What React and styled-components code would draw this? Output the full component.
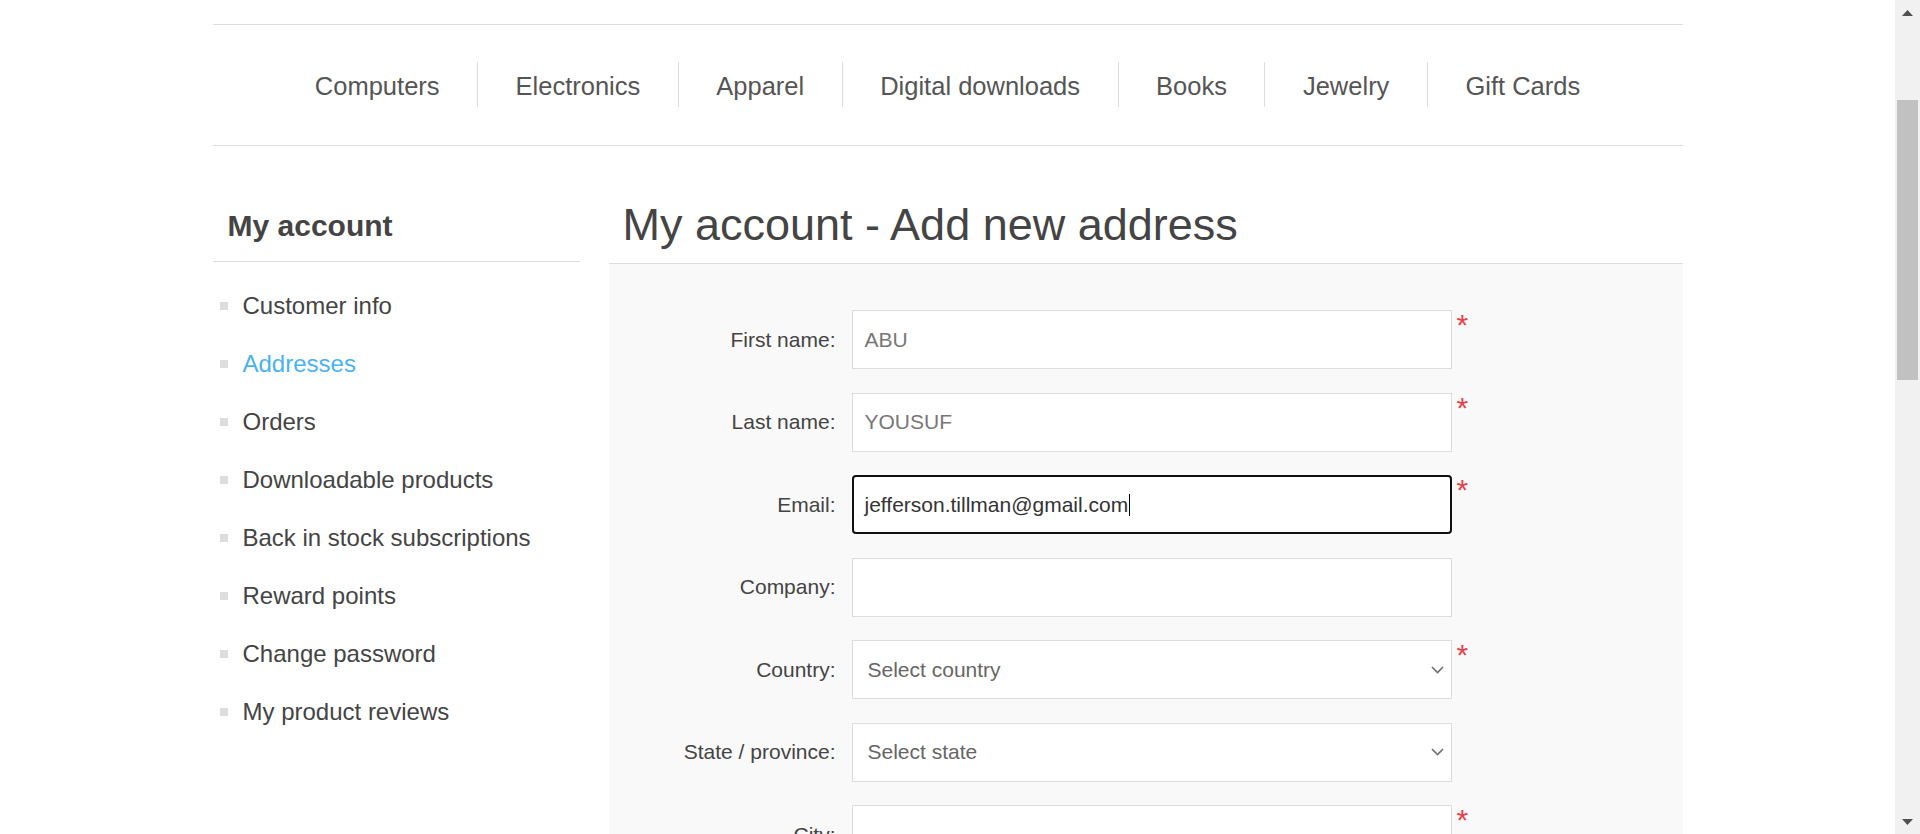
import React from 'react';
import styled, { createGlobalStyle } from 'styled-components';

const GlobalStyle = createGlobalStyle`
  html, body {
    margin: 0;
    padding: 0;
    overflow: hidden;
    background: #fff;
  }
  body {
    font-family: "Liberation Sans", Arial, Helvetica, sans-serif;
    color: #444;
  }
  * {
    box-sizing: border-box;
  }
`;

const Shell = styled.div`
  display: flex;
  height: 100vh;
  overflow: hidden;
`;

const Viewport = styled.div`
  flex: 1;
  min-width: 0;
  overflow: hidden;
`;

const MasterWrapper = styled.div`
  width: 1470px;
  margin: 0 auto;
  padding-top: 24px;
`;

const HeaderMenu = styled.nav`
  border-top: 1px solid #ddd;
  border-bottom: 1px solid #ddd;
  padding: 37px 0 38px;
`;

const MenuList = styled.ul`
  display: flex;
  justify-content: center;
  margin: 0;
  padding: 0;
  list-style: none;
`;

const MenuItem = styled.li`
  height: 45px;
  line-height: 49px;
  padding: 0 37.5px;
  font-size: 25.5px;
  color: #555;
  border-left: 1px solid #ddd;

  &:first-child {
    border-left: 0;
  }
`;

const Main = styled.div`
  display: flex;
  justify-content: space-between;
  margin-top: 44px;
`;

const Side = styled.aside`
  width: 367px;
  flex-shrink: 0;
`;

const BlockTitle = styled.div`
  padding: 18px 0 17px 15px;
  border-bottom: 1px solid #ddd;
  font-size: 30px;
  line-height: 36px;
  font-weight: bold;
  color: #444;
`;

const NavList = styled.ul`
  margin: 0;
  padding: 15px 0 0 7px;
  list-style: none;
`;

const NavItem = styled.li`
  display: flex;
  align-items: center;
  height: 58px;
  font-size: 24px;
  color: ${(p) => (p.$active ? '#4ab2f1' : '#444')};

  &::before {
    content: '';
    width: 8px;
    height: 8px;
    margin-right: 15px;
    background: #ddd;
  }
`;

const Center = styled.section`
  width: 1074px;
  flex-shrink: 0;
`;

const PageTitle = styled.div`
  padding: 9px 14px 12px;
  border-bottom: 1px solid #ddd;
`;

const Heading = styled.h1`
  margin: 0;
  font-size: 45px;
  line-height: 52px;
  font-weight: normal;
  color: #444;
`;

const FormFields = styled.div`
  background: #f9f9f9;
  padding: 46px 0 40px;
`;

const Row = styled.div`
  display: grid;
  grid-template-columns: 243px 600px auto;
  height: 59px;
  margin-bottom: 23.5px;
`;

const Label = styled.label`
  align-self: center;
  padding-right: 16px;
  text-align: right;
  font-size: 21px;
  color: #444;
`;

const Field = styled.div`
  display: flex;
  align-items: center;
  height: 59px;
  padding: 0 ${(p) => (p.$focused ? '11px' : '12px')};
  background: #fff;
  border: ${(p) => (p.$focused ? '2px solid #101010' : '1px solid #ddd')};
  border-radius: ${(p) => (p.$focused ? '4px' : '0')};
  font-size: 21px;
  color: ${(p) => (p.$focused ? '#333' : '#777')};
  white-space: nowrap;
`;

const SelectBox = styled(Field)`
  justify-content: space-between;
  padding: 0 7px 0 15px;
  color: #666;
`;

const Caret = styled.span`
  width: 1px;
  height: 22px;
  margin-left: 1px;
  background: #000;
`;

const Required = styled.span`
  margin-left: 5px;
  font-size: 30px;
  line-height: 30px;
  color: #e4434b;
`;

const ScrollBar = styled.div`
  display: flex;
  flex-direction: column;
  width: 25px;
  flex-shrink: 0;
  background: #f1f1f1;
`;

const ScrollArrow = styled.div`
  display: flex;
  align-items: center;
  justify-content: center;
  height: 25px;
`;

const ScrollTrack = styled.div`
  flex: 1;
  padding: 75px 2px 0;
`;

const ScrollThumb = styled.div`
  height: 280px;
  background: #c1c1c1;
`;

const menu = [
  'Computers',
  'Electronics',
  'Apparel',
  'Digital downloads',
  'Books',
  'Jewelry',
  'Gift Cards',
];

const accountLinks = [
  'Customer info',
  'Addresses',
  'Orders',
  'Downloadable products',
  'Back in stock subscriptions',
  'Reward points',
  'Change password',
  'My product reviews',
];

const fields = [
  { label: 'First name:', value: 'ABU', required: true },
  { label: 'Last name:', value: 'YOUSUF', required: true },
  { label: 'Email:', value: 'jefferson.tillman@gmail.com', required: true, focused: true },
  { label: 'Company:', value: '' },
  { label: 'Country:', select: 'Select country', required: true },
  { label: 'State / province:', select: 'Select state' },
  { label: 'City:', value: '', required: true },
  { label: 'Address 1:', value: '', required: true },
  { label: 'Address 2:', value: '' },
];

function Chevron() {
  return (
    <svg width="13" height="8" viewBox="0 0 13 8">
      <polyline points="1,1 6.5,6.5 12,1" fill="none" stroke="#6e6e6e" strokeWidth="1.6" />
    </svg>
  );
}

function Triangle({ down }) {
  return (
    <svg width="11" height="6" viewBox="0 0 11 6">
      <polygon points={down ? '0,0 11,0 5.5,6' : '5.5,0 11,6 0,6'} fill="#505050" />
    </svg>
  );
}

function FormRow({ field }) {
  return (
    <Row>
      <Label>{field.label}</Label>
      {field.select ? (
        <SelectBox>
          {field.select}
          <Chevron />
        </SelectBox>
      ) : (
        <Field $focused={field.focused}>
          {field.value}
          {field.focused && <Caret />}
        </Field>
      )}
      {field.required && <Required>*</Required>}
    </Row>
  );
}

export default function App() {
  return (
    <Shell>
      <GlobalStyle />
      <Viewport>
        <MasterWrapper>
          <HeaderMenu>
            <MenuList>
              {menu.map((item) => (
                <MenuItem key={item}>{item}</MenuItem>
              ))}
            </MenuList>
          </HeaderMenu>
          <Main>
            <Side>
              <BlockTitle>My account</BlockTitle>
              <NavList>
                {accountLinks.map((link) => (
                  <NavItem key={link} $active={link === 'Addresses'}>
                    {link}
                  </NavItem>
                ))}
              </NavList>
            </Side>
            <Center>
              <PageTitle>
                <Heading>My account - Add new address</Heading>
              </PageTitle>
              <FormFields>
                {fields.map((field) => (
                  <FormRow key={field.label} field={field} />
                ))}
              </FormFields>
            </Center>
          </Main>
        </MasterWrapper>
      </Viewport>
      <ScrollBar>
        <ScrollArrow>
          <Triangle />
        </ScrollArrow>
        <ScrollTrack>
          <ScrollThumb />
        </ScrollTrack>
        <ScrollArrow>
          <Triangle down />
        </ScrollArrow>
      </ScrollBar>
    </Shell>
  );
}
